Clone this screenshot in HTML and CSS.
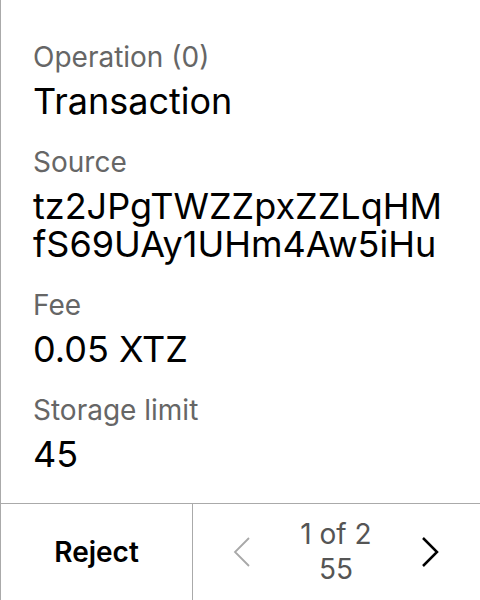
FILE: index.html
```html
<!DOCTYPE html>
<html>
<head>
<meta charset="utf-8">
<link rel="stylesheet" href="styles.css">
</head>
<body>
<div class="screen">
  <div class="content">
    <div class="field">
      <div class="label">Operation (0)</div>
      <div class="value">Transaction</div>
    </div>
    <div class="field">
      <div class="label">Source</div>
      <div class="value">tz2JPgTWZZpxZZLqHM<br>fS69UAy1UHm4Aw5iHu</div>
    </div>
    <div class="field">
      <div class="label">Fee</div>
      <div class="value">0.05 XTZ</div>
    </div>
    <div class="field">
      <div class="label">Storage limit</div>
      <div class="value">45</div>
    </div>
  </div>
  <div class="footer">
    <div class="reject">Reject</div>
    <div class="pager">
      <svg class="chev" width="20" height="32" viewBox="0 0 20 32"><polyline points="17,2 3,16 17,30" fill="none" stroke="#a8a8a8" stroke-width="1.8"/></svg>
      <div class="pages"><div>1 of 2</div><div>55</div></div>
      <svg class="chev" width="20" height="32" viewBox="0 0 20 32"><polyline points="3,2 17,16 3,30" fill="none" stroke="#000" stroke-width="2.5"/></svg>
    </div>
  </div>
</div>
</body>
</html>
```
FILE: styles.css
```css
html, body {
  margin: 0;
  padding: 0;
  background: #fff;
}
.screen {
  width: 480px;
  height: 600px;
  box-sizing: border-box;
  border-left: 1px solid #aaaaaa;
  display: flex;
  flex-direction: column;
  font-family: Inter, "Noto Sans", sans-serif;
}
.content {
  flex: 1;
  padding: 40px 0 0 32px;
  display: flex;
  flex-direction: column;
  gap: 25px;
}
.label {
  font-size: 28px;
  line-height: 34px;
  margin-bottom: 8px;
  color: #666666;
}
.value {
  font-size: 36px;
  line-height: 38px;
  color: #000;
}
.footer {
  height: 96px;
  border-top: 1px solid #aaaaaa;
  display: flex;
}
.reject {
  width: 191px;
  border-right: 1px solid #aaaaaa;
  display: flex;
  align-items: center;
  justify-content: center;
  font-size: 28px;
  font-weight: 600;
  color: #000;
}
.pager {
  flex: 1;
  display: flex;
  align-items: center;
  justify-content: space-between;
  padding: 0 40px 0 39px;
}
.pages {
  text-align: center;
  font-size: 28px;
  line-height: 35px;
  color: #555555;
}
```
